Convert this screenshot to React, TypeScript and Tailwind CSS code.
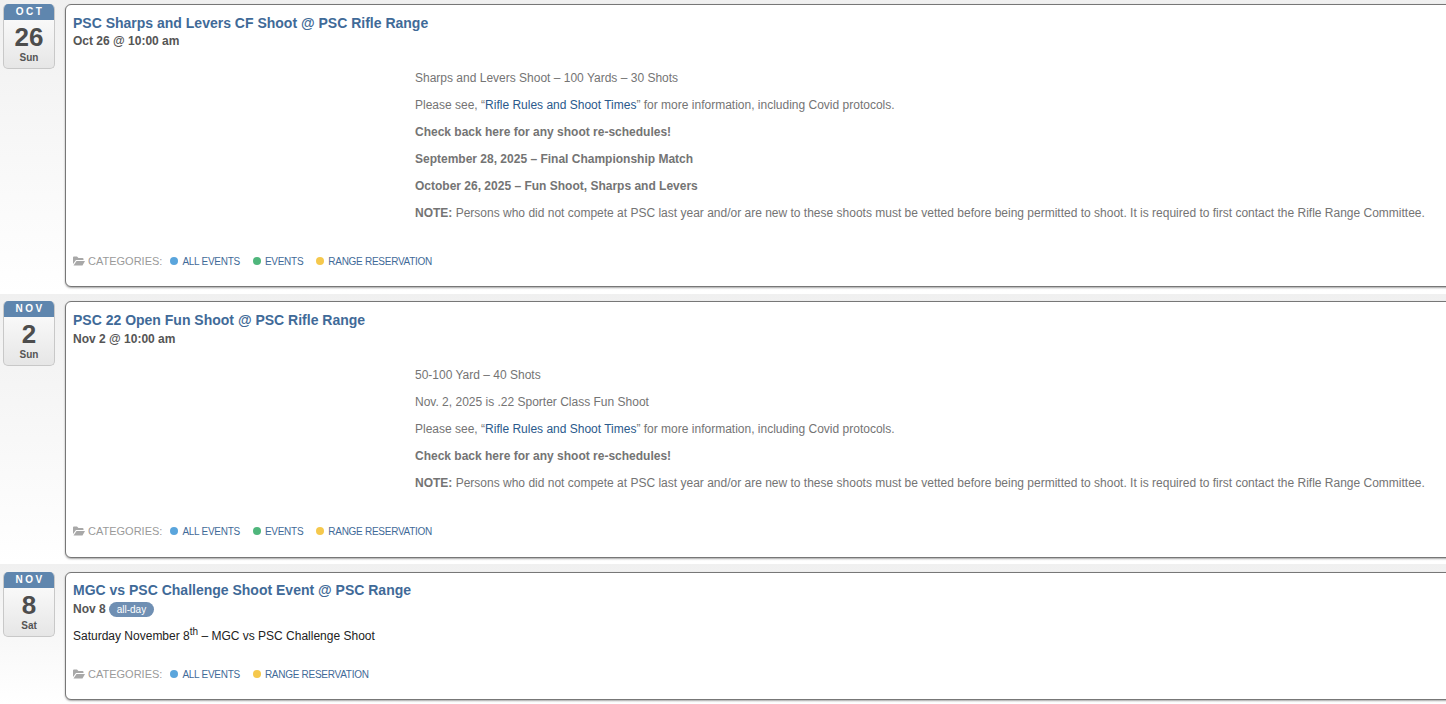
const sans = "font-['Liberation_Sans',Arial,sans-serif]";

interface Category {
  name: string;
  color: string;
}

const allEvents = { name: 'ALL EVENTS', color: 'bg-[#5aa5dc]' };
const events = { name: 'EVENTS', color: 'bg-[#4fb67c]' };
const range = { name: 'RANGE RESERVATION', color: 'bg-[#f5c84c]' };

function DateBox({ month, day, weekday }: { month: string; day: string; weekday: string }) {
  return (
    <div className="w-[52px] h-[65px] shrink-0 rounded-[5px] border border-[#c8c8c8] border-t-0 bg-gradient-to-b from-white to-[#e6e6e6] overflow-hidden text-center">
      <div className="-mx-px h-[16px] bg-[#5f86ae] text-white text-[10px] font-bold leading-[16px] tracking-[2.5px] pl-[2px]">{month}</div>
      <div className="h-[32px] text-[#4d4d4d] text-[26px] font-bold leading-[34px]">{day}</div>
      <div className="text-[#555] text-[10px] font-bold leading-[12px]">{weekday}</div>
    </div>
  );
}

function Categories({ items, top }: { items: Category[]; top: string }) {
  return (
    <div className={`flex items-center h-[14px] text-[10px] tracking-[-0.27px] ${top}`}>
      <svg width="12" height="10" viewBox="0 0 24 20" className="mr-[3px] fill-[#a8a8a8]">
        <path d="M0 3a2 2 0 0 1 2-2h6l3 3h8a2 2 0 0 1 2 2v2H6L0 16V3z" />
        <path d="M7 10h17l-5 9H1z" />
      </svg>
      <span className="text-[#9a9a9a] text-[11px] tracking-normal mr-[8px]">CATEGORIES:</span>
      {items.map((c) => (
        <span key={c.name} className="flex items-center mr-[13px] text-[#3f6a98]">
          <span className={`w-[8px] h-[8px] rounded-full mr-[4px] ${c.color}`} />
          {c.name}
        </span>
      ))}
    </div>
  );
}

function RulesLine() {
  return (
    <p>
      Please see, “<a className="text-[#2a5a8c]">Rifle Rules and Shoot Times</a>” for more information, including Covid protocols.
    </p>
  );
}

function NoteLine() {
  return (
    <p>
      <b>NOTE:</b> Persons who did not compete at PSC last year and/or are new to these shoots must be vetted before being permitted to shoot. It is required to first contact the Rifle Range Committee.
    </p>
  );
}

function EventRow({
  month, day, weekday, title, when, children, rowClass, cardClass,
}: {
  month: string; day: string; weekday: string; title: string; when: React.ReactNode;
  children: React.ReactNode; rowClass: string; cardClass: string;
}) {
  return (
    <div className={`flex pl-[3px] bg-gradient-to-b from-[#f0f0f0] to-white ${rowClass}`}>
      <DateBox month={month} day={day} weekday={weekday} />
      <div className={`ml-[10px] w-[1400px] shrink-0 bg-white border border-[#777] rounded-[6px] shadow-[0_1px_2px_rgba(0,0,0,0.35)] pl-[7px] ${cardClass}`}>
        <div className="text-[#3f6a98] text-[14px] font-bold leading-[17px]">{title}</div>
        <div className="text-[#555] text-[12px] font-bold leading-[17px] flex items-center">{when}</div>
        {children}
      </div>
    </div>
  );
}

export default function App() {
  return (
    <div className={`${sans} w-[1446px] h-[704px] overflow-hidden bg-white`}>
      <EventRow month="OCT" day="26" weekday="Sun" rowClass="h-[294px] pt-[4px]" cardClass="h-[283px] pt-[10px]"
        title="PSC Sharps and Levers CF Shoot @ PSC Rifle Range" when={<span className="mt-[1px]">Oct 26 @ 10:00 am</span>}>
        <div className="ml-[342px] mt-[15px] text-[12px] leading-[27px] text-[#747474] whitespace-nowrap">
          <p>Sharps and Levers Shoot – 100 Yards – 30 Shots</p>
          <RulesLine />
          <p><b>Check back here for any shoot re-schedules!</b></p>
          <p><b>September 28, 2025 – Final Championship Match</b></p>
          <p><b>October 26, 2025 – Fun Shoot, Sharps and Levers</b></p>
          <NoteLine />
        </div>
        <Categories items={[allEvents, events, range]} top="mt-[27px]" />
      </EventRow>
      <EventRow month="NOV" day="2" weekday="Sun" rowClass="h-[270px] pt-[7px]" cardClass="h-[257px] pt-[10px]"
        title="PSC 22 Open Fun Shoot @ PSC Rifle Range" when={<span className="mt-[2px]">Nov 2 @ 10:00 am</span>}>
        <div className="ml-[342px] mt-[14px] text-[12px] leading-[27px] text-[#747474] whitespace-nowrap">
          <p>50-100 Yard – 40 Shots</p>
          <p>Nov. 2, 2025 is .22 Sporter Class Fun Shoot</p>
          <RulesLine />
          <p><b>Check back here for any shoot re-schedules!</b></p>
          <NoteLine />
        </div>
        <Categories items={[allEvents, events, range]} top="mt-[27px]" />
      </EventRow>
      <EventRow month="NOV" day="8" weekday="Sat" rowClass="h-[140px] pt-[8px]" cardClass="h-[128px] pt-[9px]"
        title="MGC vs PSC Challenge Shoot Event @ PSC Range"
        when={<span className="flex items-center mt-[2px]">Nov 8<span className="ml-[3px] h-[15px] px-[8px] rounded-full bg-[#6f8fb3] text-white text-[10px] font-normal leading-[15px]">all-day</span></span>}>
        <div className="mt-[9px] text-[12px] leading-[18px] text-[#222]">
          Saturday November 8<sup className="text-[10px] leading-none">th</sup> – MGC vs PSC Challenge Shoot
        </div>
        <Categories items={[allEvents, range]} top="mt-[22px]" />
      </EventRow>
    </div>
  );
}
